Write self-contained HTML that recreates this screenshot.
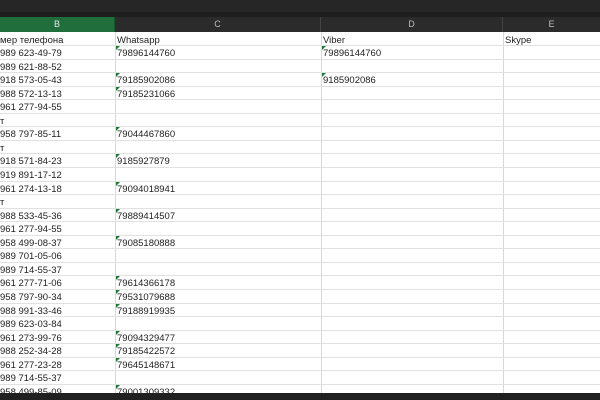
<!DOCTYPE html>
<html><head><meta charset="utf-8"><style>
*{margin:0;padding:0;box-sizing:border-box}
body{width:600px;height:400px;overflow:hidden;background:#fff;position:relative;font-family:"Liberation Sans","DejaVu Sans",sans-serif}
#top{position:absolute;left:0;top:0;width:600px;height:12px;background:#262626}
#top2{position:absolute;left:0;top:12px;width:600px;height:5px;background:#1e1e1e}
#hdr{position:absolute;left:0;top:17px;width:600px;height:15px;background:#2b2b2b;font-size:9px;color:#bbb}
#hdr div{position:absolute;top:0;height:15px;line-height:15px;text-align:center;border-right:1px solid #444}
.row{position:absolute;left:0;width:600px;height:13.6px;border-bottom:1px solid #e1e1e1;font-size:9.5px;color:#222;line-height:13px}
.row span{position:absolute;top:1px;white-space:nowrap}
.vl{position:absolute;top:32px;height:361px;width:1px;background:#d8d8d8}
.tri{position:absolute;top:0;width:0;height:0;border-top:4px solid #1d7a35;border-right:4px solid transparent}
#bot{position:absolute;left:0;top:393px;width:600px;height:7px;background:#202020}
</style></head><body>
<div id="top"></div><div id="top2"></div>
<div id="hdr">
<div style="left:0;width:115px;background:#1f6e3c;color:#e8e8e8;border-right:1px solid #185a30">B</div>
<div style="left:115px;width:206px">C</div>
<div style="left:321px;width:182px">D</div>
<div style="left:503px;width:97px;border:none">E</div>
</div>
<div class="vl" style="left:115px"></div>
<div class="vl" style="left:321px"></div>
<div class="vl" style="left:503px"></div>
<div id="rows"></div>
<script>
var d=[["мер телефона","Whatsapp","Viber","Skype"],["989 623-49-79","79896144760","79896144760"],["989 621-88-52"],["918 573-05-43","79185902086","9185902086"],["988 572-13-13","79185231066"],["961 277-94-55"],["т"],["958 797-85-11","79044467860"],["т"],["918 571-84-23","9185927879"],["919 891-17-12"],["961 274-13-18","79094018941"],["т"],["988 533-45-36","79889414507"],["961 277-94-55"],["958 499-08-37","79085180888"],["989 701-05-06"],["989 714-55-37"],["961 277-71-06","79614366178"],["958 797-90-34","79531079688"],["988 991-33-46","79188919935"],["989 623-03-84"],["961 273-99-76","79094329477"],["988 252-34-28","79185422572"],["961 277-23-28","79645148671"],["989 714-55-37"],["958 499-85-09","79001309332"]];
var h="";var xs=[0,117,323,505];
d.forEach(function(r,i){var t=32.5+i*13.55;h+='<div class="row" style="top:'+t+'px">';
r.forEach(function(c,j){if(!c)return;h+='<span style="left:'+xs[j]+'px">'+c+'</span>';if(i>0&&j>0)h+='<div class="tri" style="left:'+(xs[j]-1)+'px"></div>';});
h+='</div>';});
document.getElementById("rows").innerHTML=h;
</script>
<div id="bot"></div>
</body></html>
